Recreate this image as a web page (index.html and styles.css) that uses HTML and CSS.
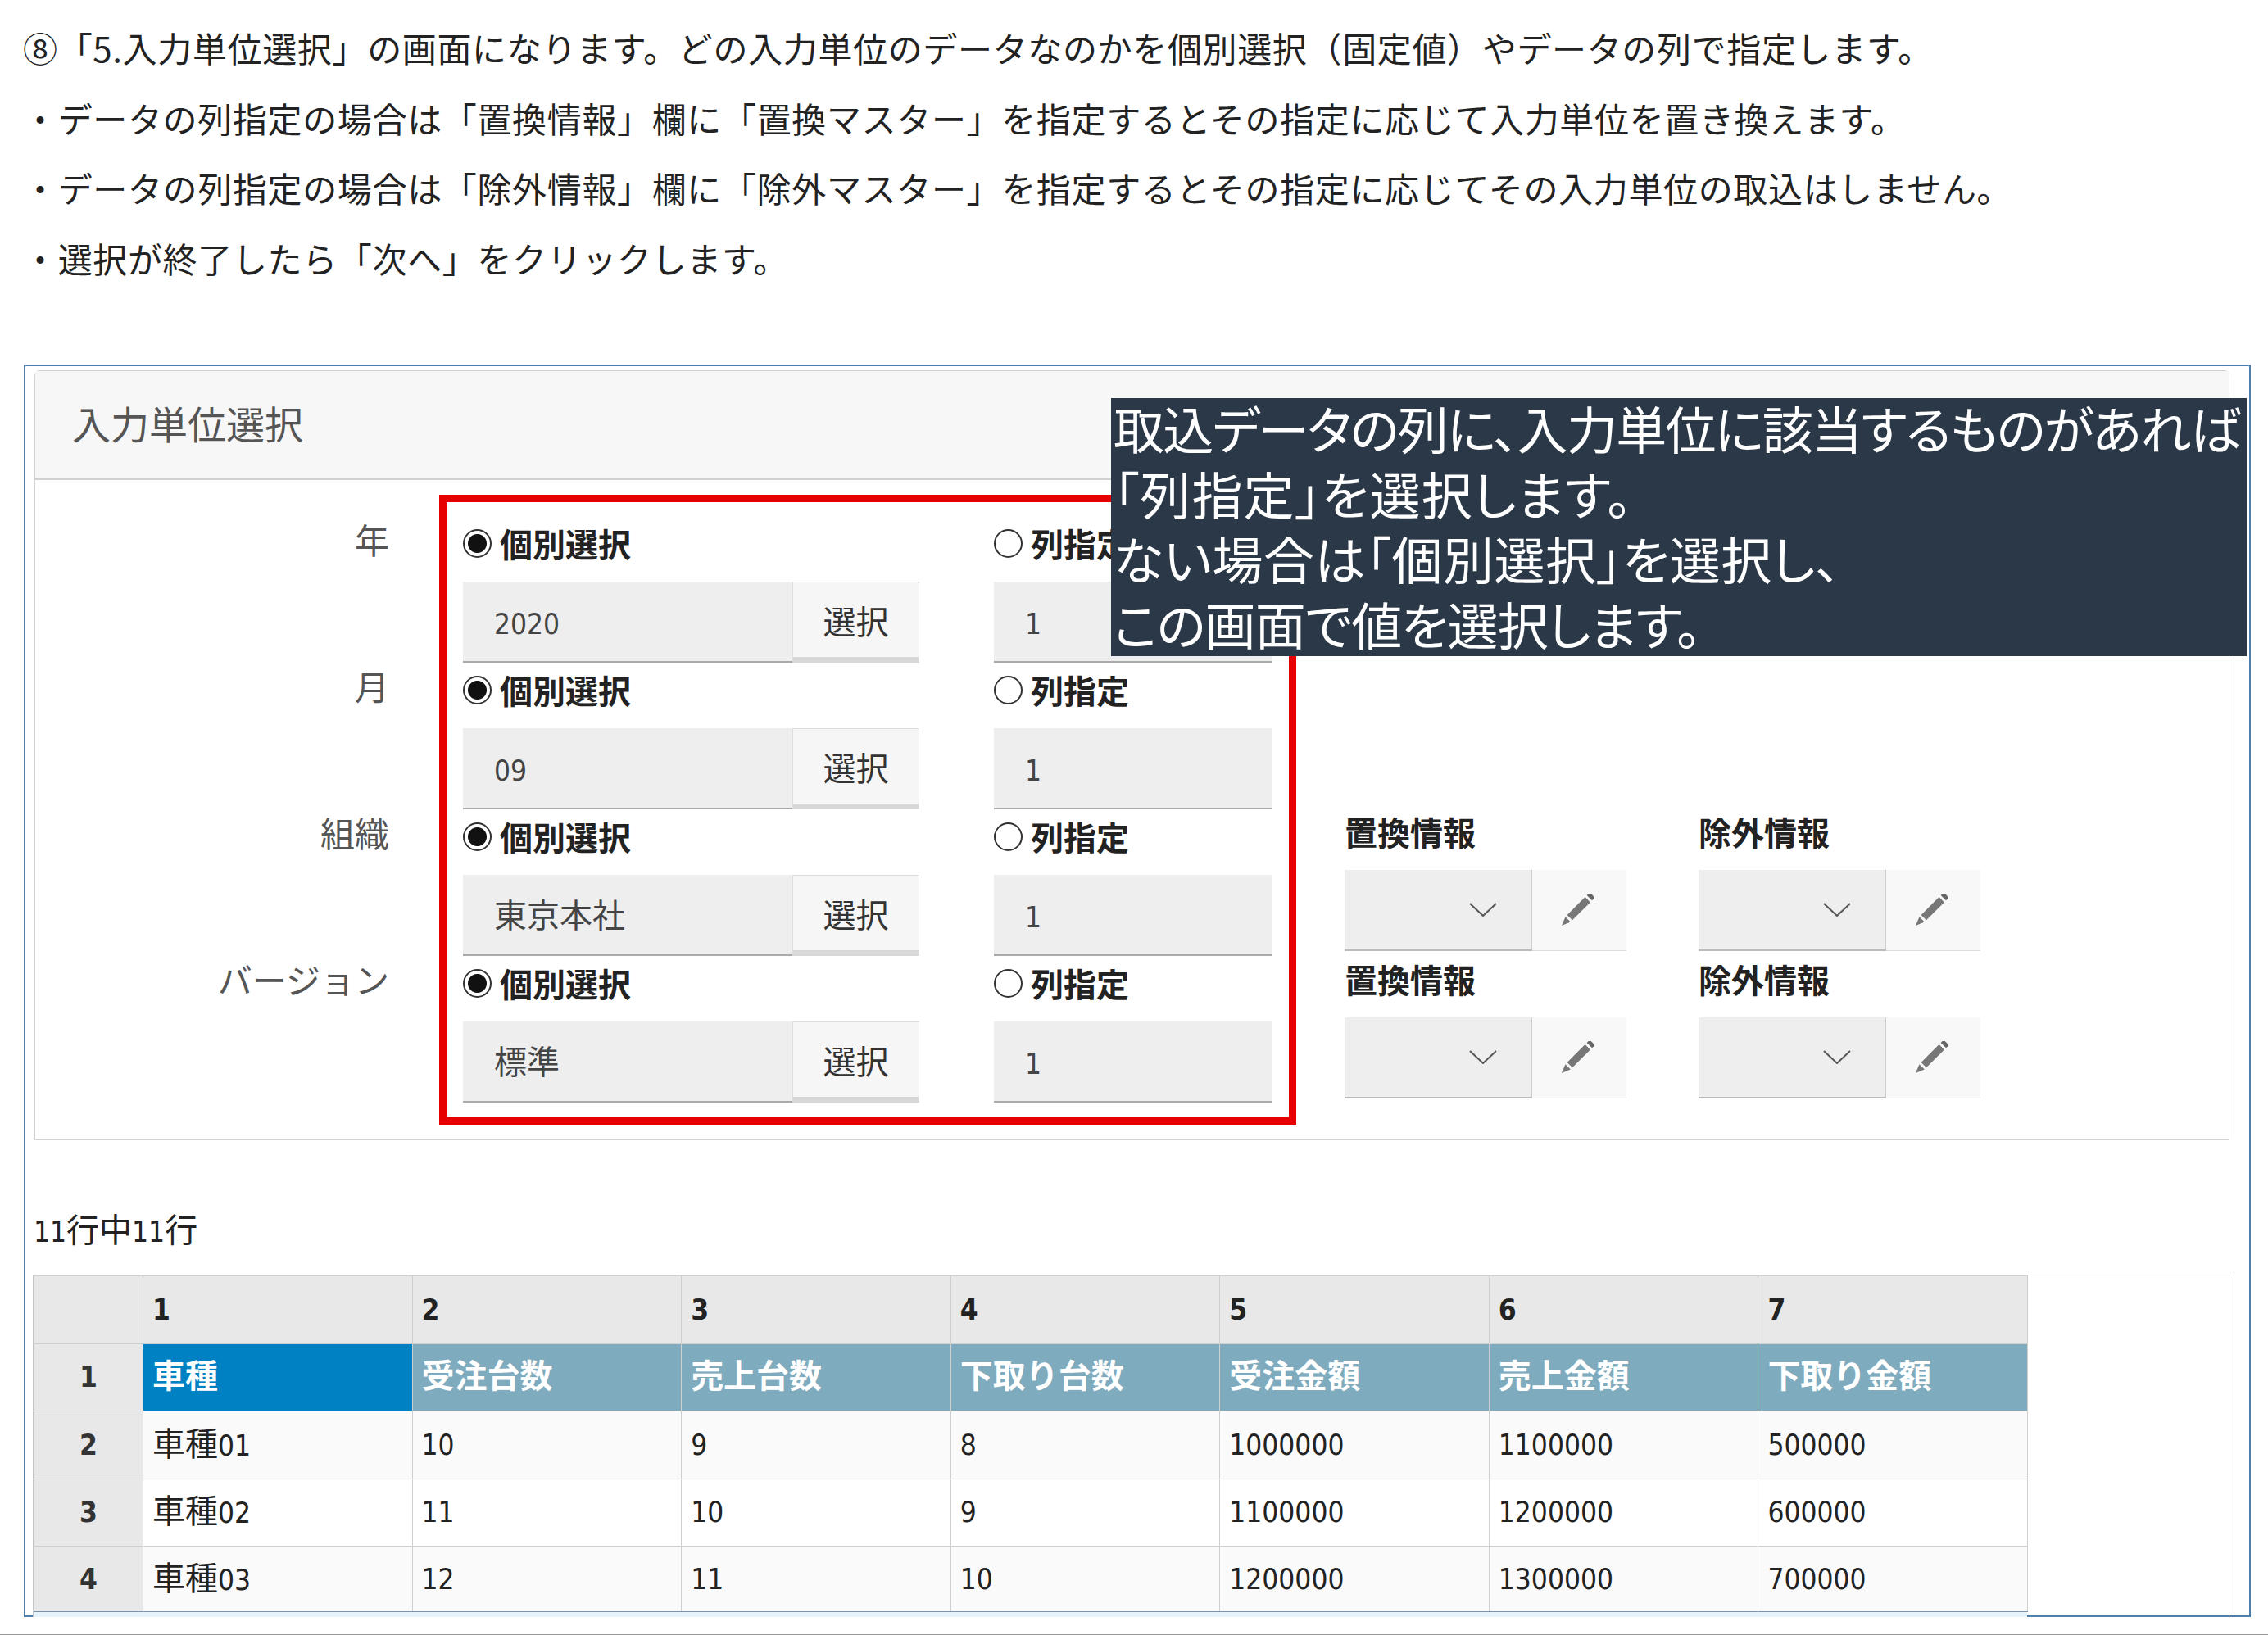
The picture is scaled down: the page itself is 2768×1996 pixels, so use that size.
FILE: index.html
```html
<!DOCTYPE html>
<html lang="ja">
<head>
  <meta charset="UTF-8" />
  <title>入力単位選択</title>
  <link rel="stylesheet" href="styles.css">
</head>
<body>
  <!-- Manual text -->
  <div class="notes">
    <p>⑧「5.入力単位選択」の画面になります。どの入力単位のデータなのかを個別選択（固定値）やデータの列で指定します。</p>
    <p>・データの列指定の場合は「置換情報」欄に「置換マスター」を指定するとその指定に応じて入力単位を置き換えます。</p>
    <p>・データの列指定の場合は「除外情報」欄に「除外マスター」を指定するとその指定に応じてその入力単位の取込はしません。</p>
    <p>・選択が終了したら「次へ」をクリックします。</p>
  </div>

  <div class="frame">
    <section class="panel">
      <h2 class="panel-title">入力単位選択</h2>
      <div class="panel-body">
        <div class="row-labels">
          <div>年</div>
          <div>月</div>
          <div>組織</div>
          <div>バージョン</div>
        </div>

        <div class="choice-box">
          <div class="choice-row">
            <label class="radio"><input type="radio" name="year" checked>個別選択</label>
            <label class="radio"><input type="radio" name="year">列指定</label>
            <div class="pick"><div class="field"><span class="num">2020</span></div><button class="pick-btn">選択</button></div>
            <div class="field"><span class="num">1</span></div>
          </div>
          <div class="choice-row">
            <label class="radio"><input type="radio" name="month" checked>個別選択</label>
            <label class="radio"><input type="radio" name="month">列指定</label>
            <div class="pick"><div class="field"><span class="num">09</span></div><button class="pick-btn">選択</button></div>
            <div class="field"><span class="num">1</span></div>
          </div>
          <div class="choice-row">
            <label class="radio"><input type="radio" name="org" checked>個別選択</label>
            <label class="radio"><input type="radio" name="org">列指定</label>
            <div class="pick"><div class="field">東京本社</div><button class="pick-btn">選択</button></div>
            <div class="field"><span class="num">1</span></div>
          </div>
          <div class="choice-row">
            <label class="radio"><input type="radio" name="version" checked>個別選択</label>
            <label class="radio"><input type="radio" name="version">列指定</label>
            <div class="pick"><div class="field">標準</div><button class="pick-btn">選択</button></div>
            <div class="field"><span class="num">1</span></div>
          </div>
        </div>

        <div class="info-grid">
          <div class="info">
            <div class="info-label">置換情報</div>
            <div class="info-controls">
              <div class="select"><svg class="chevron" viewBox="0 0 34 17"><polyline points="1,1 17,16 33,1"/></svg></div>
              <button class="edit-btn"><svg class="pencil" viewBox="0 0 40 40"><use href="#pencil"/></svg></button>
            </div>
          </div>
          <div class="info">
            <div class="info-label">除外情報</div>
            <div class="info-controls">
              <div class="select"><svg class="chevron" viewBox="0 0 34 17"><polyline points="1,1 17,16 33,1"/></svg></div>
              <button class="edit-btn"><svg class="pencil" viewBox="0 0 40 40"><use href="#pencil"/></svg></button>
            </div>
          </div>
          <div class="info">
            <div class="info-label">置換情報</div>
            <div class="info-controls">
              <div class="select"><svg class="chevron" viewBox="0 0 34 17"><polyline points="1,1 17,16 33,1"/></svg></div>
              <button class="edit-btn"><svg class="pencil" viewBox="0 0 40 40"><use href="#pencil"/></svg></button>
            </div>
          </div>
          <div class="info">
            <div class="info-label">除外情報</div>
            <div class="info-controls">
              <div class="select"><svg class="chevron" viewBox="0 0 34 17"><polyline points="1,1 17,16 33,1"/></svg></div>
              <button class="edit-btn"><svg class="pencil" viewBox="0 0 40 40"><use href="#pencil"/></svg></button>
            </div>
          </div>
        </div>
      </div>
    </section>

    <div class="count"><span class="num">11</span>行中<span class="num">11</span>行</div>

    <div class="table-wrap">
      <table class="data-table">
        <colgroup>
          <col class="col-index"><col class="col-data"><col class="col-data"><col class="col-data"><col class="col-data"><col class="col-data"><col class="col-data"><col class="col-data">
        </colgroup>
        <tr class="head-row">
          <th class="index"></th>
          <th class="num">1</th><th class="num">2</th><th class="num">3</th><th class="num">4</th><th class="num">5</th><th class="num">6</th><th class="num">7</th>
        </tr>
        <tr class="title-row">
          <th class="index num">1</th>
          <td class="active">車種</td><td>受注台数</td><td>売上台数</td><td>下取り台数</td><td>受注金額</td><td>売上金額</td><td>下取り金額</td>
        </tr>
        <tr class="odd">
          <th class="index num">2</th>
          <td class="name">車種<span class="num">01</span></td><td class="num">10</td><td class="num">9</td><td class="num">8</td><td class="num">1000000</td><td class="num">1100000</td><td class="num">500000</td>
        </tr>
        <tr>
          <th class="index num">3</th>
          <td class="name">車種<span class="num">02</span></td><td class="num">11</td><td class="num">10</td><td class="num">9</td><td class="num">1100000</td><td class="num">1200000</td><td class="num">600000</td>
        </tr>
        <tr class="odd last-row">
          <th class="index num">4</th>
          <td class="name">車種<span class="num">03</span></td><td class="num">12</td><td class="num">11</td><td class="num">10</td><td class="num">1200000</td><td class="num">1300000</td><td class="num">700000</td>
        </tr>
      </table>
    </div>

    <!-- Callout laid over the form -->
    <div class="callout">
      <div class="line-tight">取込データの列に、入力単位に該当するものがあれば</div>
      <div class="line-wide">「列指定」を選択します。</div>
      <div class="line-open">ない場合は「個別選択」を選択し、</div>
      <div class="line-snug">この画面で値を選択します。</div>
    </div>
  </div>

  <div class="page-end"></div>

  <svg class="icon-defs" width="0" height="0">
    <g id="pencil" transform="rotate(45 20 20)">
      <rect x="15.5" y="-6" width="9" height="5" fill="#666"/>
      <rect x="15.5" y="2" width="9" height="31" fill="#777"/>
      <polygon points="15.5,36 24.5,36 20,47" fill="#777"/>
    </g>
  </svg>
</body>
</html>
```

FILE: styles.css
```css
* {
  box-sizing: border-box;
}

html, body {
  margin: 0;
  padding: 0;
  height: 1996px;
  overflow: hidden;
}

body {
  background: #fff;
  color: #222;
  font-family: "Noto Sans CJK JP", sans-serif;
  font-size: 40px;
}

.num {
  font-family: "DejaVu Sans", "Noto Sans CJK JP", sans-serif;
  font-stretch: condensed;
  font-size: 35px;
  font-weight: 400;
}

/* notes */
.notes {
  padding: 15px 0 0 28px;
  height: 445px;
}

.notes p {
  margin: 0;
  height: 85.5px;
  font-size: 42px;
  line-height: 85.5px;
  letter-spacing: 0.65px;
  white-space: nowrap;
}

/* screenshot frame */
.frame {
  position: relative;
  width: 2718px;
  height: 1529px;
  margin-left: 29px;
  padding: 5px 24px 0 11px;
  border: 2px solid #4f7fae;
}

.panel {
  height: 940px;
  border: 1px solid #d2d2d2;
  border-radius: 6px 6px 0 0;
}

.panel-title {
  margin: 0;
  height: 133px;
  padding: 0 0 0 45px;
  background: #f7f7f7;
  border-bottom: 2px solid #d0d0d0;
  color: #555;
  font-size: 47px;
  font-weight: 400;
  line-height: 126px;
}

.panel-body {
  display: flex;
  align-items: flex-start;
  padding-top: 18px;
}

.row-labels {
  width: 432px;
  margin-right: 61px;
  padding-top: 29px;
  color: #555;
  font-size: 42px;
  line-height: 50px;
  text-align: right;
}

.row-labels div {
  height: 179px;
}

/* red box */
.choice-box {
  width: 1046px;
  height: 769px;
  padding: 26px 20px 0;
  border: 9px solid #e60000;
}

.choice-row {
  display: grid;
  grid-template-columns: 557px 339px;
  grid-template-rows: 50px 99px;
  column-gap: 91px;
  row-gap: 21px;
  margin-bottom: 9px;
}

.radio {
  display: flex;
  align-items: center;
  gap: 10px;
  padding-bottom: 2px;
  font-weight: 700;
}

.radio input {
  appearance: none;
  width: 35px;
  height: 35px;
  margin: 0;
  border: 2px solid #333;
  border-radius: 50%;
  background: #fff;
}

.radio input:checked {
  background: radial-gradient(circle, #111 0 11px, #fff 12px);
}

.pick {
  display: flex;
}

.pick .field {
  flex: 1;
}

.field {
  padding-left: 38px;
  background: #eee;
  border-bottom: 2px solid #aaa;
  color: #444;
  line-height: 94px;
}

.pick-btn {
  width: 155px;
  padding: 0;
  background: #f6f6f6;
  border: 1px solid #ddd;
  border-bottom: 7px solid #d8d8d8;
  color: #333;
  font-family: inherit;
  font-size: 40px;
}

/* right-hand selects */
.info-grid {
  display: grid;
  grid-template-columns: 344px 344px;
  grid-auto-rows: 180px;
  column-gap: 88px;
  margin: 386px 0 0 59px;
}

.info-label {
  height: 50px;
  margin-bottom: 22px;
  font-weight: 700;
  line-height: 50px;
}

.info-controls {
  display: flex;
  height: 99px;
}

.select {
  position: relative;
  display: flex;
  align-items: center;
  justify-content: flex-end;
  width: 229px;
  padding: 0 42px 0 0;
  background: #eee;
  border-bottom: 2px solid #bbb;
  border-right: 1px solid #ccc;
}

.chevron {
  width: 34px;
  height: 17px;
  fill: none;
  stroke: #555;
  stroke-width: 2;
}

.edit-btn {
  display: flex;
  align-items: center;
  justify-content: center;
  width: 115px;
  padding: 0 5px 0 0;
  background: #f8f8f8;
  border: 0;
  border-bottom: 1px solid #ddd;
}

.pencil {
  width: 40px;
  height: 40px;
}

.icon-defs {
  position: absolute;
}

/* table */
.count {
  height: 50px;
  margin-top: 82px;
  margin-left: -1px;
  line-height: 50px;
}

.table-wrap {
  height: 418px;
  margin-top: 32px;
  margin-left: -2px;
  border: 1px solid #c4c4c4;
  border-bottom: 0;
  background: linear-gradient(#e6f3fa, #e6f3fa) left bottom / 2433px 8px no-repeat;
}

.data-table {
  border-collapse: collapse;
  table-layout: fixed;
  width: 2434px;
}

.col-index {
  width: 133px;
}

.data-table tr {
  height: 82.5px;
}

.data-table .last-row {
  height: 80px;
}

.data-table th,
.data-table td {
  padding: 0 0 0 11px;
  border: 1px solid #cfcfcf;
  font-weight: 400;
  text-align: left;
  white-space: nowrap;
}

.data-table .index {
  padding: 0;
  background: #e8e8e8;
  color: #333;
  font-weight: 700;
  text-align: center;
}

.head-row th {
  background: #e8e8e8;
  font-weight: 700;
}

.title-row td {
  padding-bottom: 8px;
  background: #7fabbe;
  color: #fff;
  font-weight: 700;
}

.title-row td.active {
  background: #0081c3;
}

.data-table .name {
  padding-bottom: 8px;
}

.odd td {
  background: #fafafa;
}

tr:last-child td,
tr:last-child th {
  border-bottom-color: #7f93a8;
}

/* callout */
.callout {
  position: absolute;
  left: 1325px;
  top: 39px;
  width: 1386px;
  height: 315px;
  padding-left: 3px;
  background: #2b3847;
  color: #fff;
  font-size: 62px;
  font-feature-settings: "palt";
  line-height: 79.5px;
  white-space: nowrap;
}

.line-tight {
  margin-top: -3px;
  letter-spacing: -1.7px;
}

.line-wide {
  letter-spacing: 1.2px;
}

.line-open {
  letter-spacing: 0.5px;
}

.line-snug {
  letter-spacing: -0.9px;
}

.page-end {
  height: 1px;
  margin-top: 21px;
  background: #999;
}
```
